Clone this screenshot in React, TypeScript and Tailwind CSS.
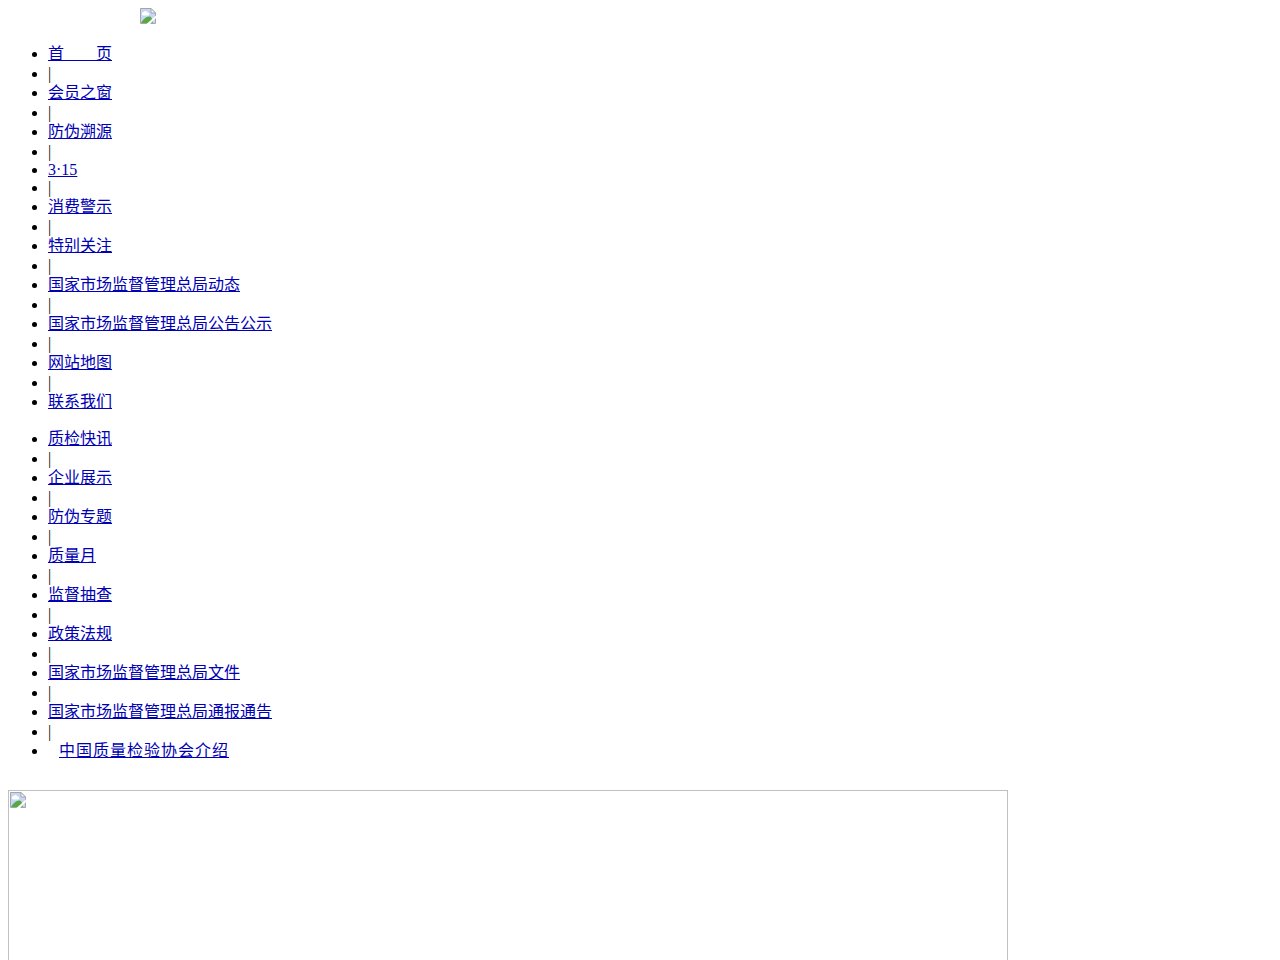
import React from 'react';
import clsx from 'clsx';

interface NavItem {
    label: string;
    latin?: boolean;
    spaced?: boolean;
}

const mainLinks: NavItem[] = [
    { label: '首\u3000\u3000页' },
    { label: '会员之窗' },
    { label: '防伪溯源' },
    { label: '3·15', latin: true },
    { label: '消费警示' },
    { label: '特别关注' },
    { label: '国家市场监督管理总局动态' },
    { label: '国家市场监督管理总局公告公示' },
    { label: '网站地图' },
    { label: '联系我们' },
];

const subLinks: NavItem[] = [
    { label: '质检快讯' },
    { label: '企业展示' },
    { label: '防伪专题' },
    { label: '质量月' },
    { label: '监督抽查' },
    { label: '政策法规' },
    { label: '国家市场监督管理总局文件' },
    { label: '国家市场监督管理总局通报通告' },
    { label: '中国质量检验协会介绍', spaced: true },
];

const MissingImage: React.FC = () => (
    <svg className="block w-4 h-4" viewBox="0 0 16 16" aria-hidden="true">
        <path d="M0.5 0.5H11L15.5 5V15.5H0.5Z" fill="#c6d6f4" stroke="#a3a7ab" />
        <path d="M3 7.5a1.8 1.8 0 0 1 .5-3.5 2.2 2.2 0 0 1 4 .5 1.5 1.5 0 0 1 .5 3Z" fill="#fff" />
        <path d="M1 15C3 11.5 6 8.5 9 8.5S12 11 13 15Z" fill="#57a942" />
        <path d="M16 7.5V10L10 16H6.5Z" fill="#fff" />
        <path d="M11 0.5V5H15.5Z" fill="#f4f6f8" stroke="#a3a7ab" />
    </svg>
);

const NavList: React.FC<{ items: NavItem[] }> = ({ items }) => (
    <ul className="my-4 list-disc pl-10">
        {items.map((item, i) => (
            <React.Fragment key={item.label}>
                {i > 0 && <li className="h-[18px] leading-[18px]">|</li>}
                <li className={item.latin ? 'h-[18px] leading-[18px]' : 'h-[21px] leading-[19px]'}>
                    <a
                        href="#"
                        className={clsx('text-[#0000b4] underline', item.spaced && 'ml-[11px] tracking-[1px]')}
                    >
                        {item.label}
                    </a>
                </li>
            </React.Fragment>
        ))}
    </ul>
);

const App: React.FC = () => (
    <div className="p-2 bg-white text-black text-base font-['Liberation_Serif','Noto_Sans_CJK_SC',serif]">
        <header className="mx-auto h-5 max-w-[1000px]">
            <MissingImage />
        </header>
        <nav>
            <NavList items={mainLinks} />
            <NavList items={subLinks} />
        </nav>
        <div className="mt-7 h-[200px] max-w-[1000px] border border-[#c0c0c0] p-px">
            <MissingImage />
        </div>
    </div>
);

export default App;
